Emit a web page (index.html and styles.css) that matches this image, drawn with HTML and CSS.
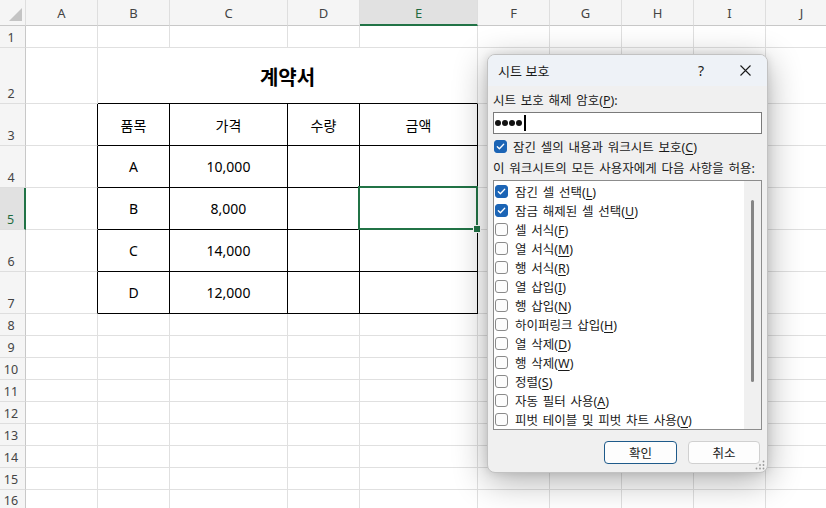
FILE: index.html
```html
<!DOCTYPE html>
<html lang="ko">
<head>
<meta charset="utf-8">
<title>시트 보호</title>
<link rel="stylesheet" href="styles.css">
</head>
<body>
<div class="sheet">
  <div class="ch corner"><svg width="25" height="25" viewBox="0 0 25 25"><polygon points="22,8 22,21 9,21" fill="#c4c4c4"/></svg></div>
  <div class="ch">A</div><div class="ch">B</div><div class="ch">C</div><div class="ch">D</div><div class="ch selc">E</div><div class="ch">F</div><div class="ch">G</div><div class="ch">H</div><div class="ch">I</div><div class="ch">J</div>

  <div class="rh">1</div><div class="c"></div><div class="c"></div><div class="c"></div><div class="c"></div><div class="c"></div><div class="c"></div><div class="c"></div><div class="c"></div><div class="c"></div><div class="c"></div>

  <div class="rh">2</div><div class="c"></div><div class="c title">계약서</div><div class="c"></div><div class="c"></div><div class="c"></div><div class="c"></div><div class="c"></div>

  <div class="rh">3</div><div class="c tl"></div><div class="c t">품목</div><div class="c t">가격</div><div class="c t">수량</div><div class="c t">금액</div><div class="c"></div><div class="c"></div><div class="c"></div><div class="c"></div><div class="c"></div>

  <div class="rh">4</div><div class="c tl"></div><div class="c t">A</div><div class="c t">10,000</div><div class="c t"></div><div class="c t"></div><div class="c"></div><div class="c"></div><div class="c"></div><div class="c"></div><div class="c"></div>

  <div class="rh selr">5</div><div class="c tl"></div><div class="c t">B</div><div class="c t">8,000</div><div class="c t"></div><div class="c t active"></div><div class="c"></div><div class="c"></div><div class="c"></div><div class="c"></div><div class="c"></div>

  <div class="rh">6</div><div class="c tl"></div><div class="c t">C</div><div class="c t">14,000</div><div class="c t"></div><div class="c t"></div><div class="c"></div><div class="c"></div><div class="c"></div><div class="c"></div><div class="c"></div>

  <div class="rh">7</div><div class="c tl"></div><div class="c t">D</div><div class="c t">12,000</div><div class="c t"></div><div class="c t"></div><div class="c"></div><div class="c"></div><div class="c"></div><div class="c"></div><div class="c"></div>

  <div class="rh">8</div><div class="c"></div><div class="c"></div><div class="c"></div><div class="c"></div><div class="c"></div><div class="c"></div><div class="c"></div><div class="c"></div><div class="c"></div><div class="c"></div>
  <div class="rh">9</div><div class="c"></div><div class="c"></div><div class="c"></div><div class="c"></div><div class="c"></div><div class="c"></div><div class="c"></div><div class="c"></div><div class="c"></div><div class="c"></div>
  <div class="rh">10</div><div class="c"></div><div class="c"></div><div class="c"></div><div class="c"></div><div class="c"></div><div class="c"></div><div class="c"></div><div class="c"></div><div class="c"></div><div class="c"></div>
  <div class="rh">11</div><div class="c"></div><div class="c"></div><div class="c"></div><div class="c"></div><div class="c"></div><div class="c"></div><div class="c"></div><div class="c"></div><div class="c"></div><div class="c"></div>
  <div class="rh">12</div><div class="c"></div><div class="c"></div><div class="c"></div><div class="c"></div><div class="c"></div><div class="c"></div><div class="c"></div><div class="c"></div><div class="c"></div><div class="c"></div>
  <div class="rh">13</div><div class="c"></div><div class="c"></div><div class="c"></div><div class="c"></div><div class="c"></div><div class="c"></div><div class="c"></div><div class="c"></div><div class="c"></div><div class="c"></div>
  <div class="rh">14</div><div class="c"></div><div class="c"></div><div class="c"></div><div class="c"></div><div class="c"></div><div class="c"></div><div class="c"></div><div class="c"></div><div class="c"></div><div class="c"></div>
  <div class="rh">15</div><div class="c"></div><div class="c"></div><div class="c"></div><div class="c"></div><div class="c"></div><div class="c"></div><div class="c"></div><div class="c"></div><div class="c"></div><div class="c"></div>
  <div class="rh last">16</div><div class="c"></div><div class="c"></div><div class="c"></div><div class="c"></div><div class="c"></div><div class="c"></div><div class="c"></div><div class="c"></div><div class="c"></div><div class="c"></div>
</div>

<div class="dlg">
  <div class="dlg-title">
    <span class="dlg-name">시트 보호</span>
    <span class="tbtn">?</span>
    <span class="tbtn"><svg width="11" height="11" viewBox="0 0 11 11"><path d="M0.5 0.5 10.5 10.5 M10.5 0.5 0.5 10.5" stroke="#1a1a1a" stroke-width="1.1" fill="none"/></svg></span>
  </div>
  <div class="dlg-body">
    <div class="lbl first">시트 보호 해제 암호(<u>P</u>):</div>
    <div class="pw"><i class="dot"></i><i class="dot"></i><i class="dot"></i><i class="dot"></i><i class="caret"></i></div>
    <div class="chkrow"><span class="cb on"><svg width="11" height="11" viewBox="0 0 11 11"><path d="M2.3 5.7 4.4 7.8 8.7 3.3" fill="none" stroke="#fff" stroke-width="1.3" stroke-linecap="round" stroke-linejoin="round"/></svg></span><span>잠긴 셀의 내용과 워크시트 보호(<u>C</u>)</span></div>
    <div class="lbl second">이 워크시트의 모든 사용자에게 다음 사항을 허용:</div>
    <div class="list">
      <div class="items">
        <div class="item"><span class="cb on"><svg width="11" height="11" viewBox="0 0 11 11"><path d="M2.3 5.7 4.4 7.8 8.7 3.3" fill="none" stroke="#fff" stroke-width="1.3" stroke-linecap="round" stroke-linejoin="round"/></svg></span><span>잠긴 셀 선택(<u>L</u>)</span></div>
        <div class="item"><span class="cb on"><svg width="11" height="11" viewBox="0 0 11 11"><path d="M2.3 5.7 4.4 7.8 8.7 3.3" fill="none" stroke="#fff" stroke-width="1.3" stroke-linecap="round" stroke-linejoin="round"/></svg></span><span>잠금 해제된 셀 선택(<u>U</u>)</span></div>
        <div class="item"><span class="cb"></span><span>셀 서식(<u>F</u>)</span></div>
        <div class="item"><span class="cb"></span><span>열 서식(<u>M</u>)</span></div>
        <div class="item"><span class="cb"></span><span>행 서식(<u>R</u>)</span></div>
        <div class="item"><span class="cb"></span><span>열 삽입(<u>I</u>)</span></div>
        <div class="item"><span class="cb"></span><span>행 삽입(<u>N</u>)</span></div>
        <div class="item"><span class="cb"></span><span>하이퍼링크 삽입(<u>H</u>)</span></div>
        <div class="item"><span class="cb"></span><span>열 삭제(<u>D</u>)</span></div>
        <div class="item"><span class="cb"></span><span>행 삭제(<u>W</u>)</span></div>
        <div class="item"><span class="cb"></span><span>정렬(<u>S</u>)</span></div>
        <div class="item"><span class="cb"></span><span>자동 필터 사용(<u>A</u>)</span></div>
        <div class="item"><span class="cb"></span><span>피벗 테이블 및 피벗 차트 사용(<u>V</u>)</span></div>
      </div>
      <div class="track"><div class="thumb"></div></div>
    </div>
    <div class="btns">
      <div class="btn primary">확인</div>
      <div class="btn">취소</div>
    </div>
  </div>
  <svg class="grip" width="10" height="10" viewBox="0 0 10 10"><circle cx="8.5" cy="1.5" r="0.9" fill="#9a9a9a"/><circle cx="8.5" cy="5" r="0.9" fill="#9a9a9a"/><circle cx="5" cy="5" r="0.9" fill="#9a9a9a"/><circle cx="8.5" cy="8.5" r="0.9" fill="#9a9a9a"/><circle cx="5" cy="8.5" r="0.9" fill="#9a9a9a"/><circle cx="1.5" cy="8.5" r="0.9" fill="#9a9a9a"/></svg>
</div>
</body>
</html>
```

FILE: styles.css
```css
* { box-sizing: border-box; }

body {
  margin: 0;
  width: 826px;
  height: 508px;
  overflow: hidden;
  position: relative;
  background: #fff;
  font-family: "Noto Sans", "Noto Sans CJK KR", sans-serif;
}

.sheet {
  display: grid;
  grid-template-columns: 26px 72px 72px 118px 72px 118px 72px 72px 72px 72px 72px;
  grid-template-rows: 26px 22px 56px repeat(5, 42px) repeat(9, 22px);
}

.ch {
  background: #f5f5f5;
  border-right: 1px solid #dedede;
  border-bottom: 1px solid #c8c8c8;
  display: flex;
  align-items: center;
  justify-content: center;
  font-size: 13px;
  color: #444;
  padding-top: 1px;
}

.ch.corner { padding: 0; display: block; }
.ch.corner svg { display: block; }

.ch.selc {
  background: #e1e1e1;
  border-bottom: 2px solid #217346;
  color: #1f6b40;
}

.rh {
  background: #f5f5f5;
  border-right: 1px solid #c8c8c8;
  border-bottom: 1px solid #dedede;
  display: flex;
  align-items: flex-end;
  justify-content: center;
  padding: 0 3px 1px 0;
  font-size: 12.5px;
  line-height: 16px;
  color: #444;
}

.rh.last {
  align-items: flex-start;
  padding-bottom: 0;
  padding-top: 3px;
}

.rh.selr {
  background: #e1e1e1;
  border-right: 2px solid #217346;
  color: #1f6b40;
}

.c {
  border-right: 1px solid #e0e0e0;
  border-bottom: 1px solid #e0e0e0;
  display: flex;
  align-items: center;
  justify-content: center;
  font-size: 14px;
  color: #000;
}

.c.title {
  grid-column: span 4;
  border-bottom: 1px solid #000;
  font-family: "Noto Sans CJK KR", sans-serif;
  font-weight: 700;
  font-size: 20px;
  padding-top: 1px;
}

.c.t {
  border-right: 1px solid #000;
  border-bottom: 1px solid #000;
}

.c.tl { border-right: 1px solid #000; }

.c.active { position: relative; }
.c.active::after {
  content: "";
  position: absolute;
  left: -2px;
  top: -2px;
  right: -1px;
  bottom: -1px;
  border: 2px solid #217346;
}
.c.active::before {
  content: "";
  position: absolute;
  right: -4px;
  bottom: -4px;
  width: 6px;
  height: 6px;
  background: #217346;
  border: 1px solid #fff;
  z-index: 2;
}

/* dialog */
.dlg {
  position: absolute;
  left: 487px;
  top: 54px;
  width: 281px;
  height: 419px;
  background: #f0f0f0;
  border: 1px solid #c2c2c2;
  border-radius: 8px;
  box-shadow: 0 8px 34px rgba(0, 0, 0, 0.32), 0 0 8px rgba(0, 0, 0, 0.1);
  overflow: hidden;
  display: flex;
  flex-direction: column;
  font-size: 12.5px;
  color: #1a1a1a;
  z-index: 5;
}

.dlg-title {
  height: 31px;
  flex: none;
  background: #eef2f7;
  display: flex;
  align-items: center;
  padding-left: 10px;
  font-size: 13px;
  font-family: "Noto Sans CJK KR", sans-serif;
}

.dlg-name { flex: 1; }

.tbtn {
  width: 44px;
  height: 31px;
  display: flex;
  align-items: center;
  justify-content: center;
  font-family: "Noto Sans", sans-serif;
  font-size: 14px;
}
.tbtn svg { display: block; }

.dlg-body {
  display: flex;
  flex-direction: column;
  padding: 0 5px;
}

.lbl {
  height: 18px;
  line-height: 18px;
  word-spacing: 1.5px;
}
.lbl.first { margin-top: 6px; }
.lbl.second { margin-top: 5px; }

u { text-decoration: underline; text-underline-offset: 2px; }

.pw {
  margin-top: 2px;
  height: 22px;
  background: #fff;
  border: 1px solid #7a7a7a;
  display: flex;
  align-items: center;
  gap: 1px;
  padding-left: 1px;
}

.dot {
  width: 6px;
  height: 6px;
  border-radius: 50%;
  background: #111;
}

.caret {
  width: 1.5px;
  height: 16px;
  background: #000;
  margin-left: 1px;
}

.chkrow {
  margin-top: 3px;
  height: 18px;
  display: flex;
  align-items: center;
  gap: 6px;
  padding-left: 1px;
  word-spacing: 1.5px;
}

.cb {
  width: 13px;
  height: 13px;
  flex: none;
  border: 1px solid #8a8a8a;
  border-radius: 3px;
  background: #fcfcfc;
}
.cb svg { display: block; }
.cb.on {
  background: #1b64b5;
  border-color: #1b64b5;
}

.list {
  margin-top: 2px;
  height: 250px;
  background: #fff;
  border: 1px solid #8c8c8c;
  display: flex;
}

.items {
  flex: 1;
  padding-top: 1px;
  display: flex;
  flex-direction: column;
}

.item {
  height: 19px;
  display: flex;
  align-items: center;
  gap: 7px;
  padding-left: 1px;
  word-spacing: 1.5px;
}

.track {
  width: 17px;
  background: #f0f0f0;
  flex: none;
}

.thumb {
  width: 3px;
  height: 182px;
  margin: 19px 0 0 7px;
  border-radius: 2px;
  background: #858585;
}

.btns {
  margin-top: 11px;
  display: flex;
  justify-content: flex-end;
  gap: 11px;
  padding-right: 2px;
}

.btn {
  width: 72px;
  height: 23px;
  display: flex;
  align-items: center;
  justify-content: center;
  background: #fdfdfd;
  border: 1px solid #d0d0d0;
  border-radius: 4px;
  font-size: 12.5px;
  font-family: "Noto Sans CJK KR", sans-serif;
}

.btn.primary {
  width: 73px;
  border-color: #1e5a8a;
}

.grip {
  position: absolute;
  right: 2px;
  bottom: 2px;
}
```
